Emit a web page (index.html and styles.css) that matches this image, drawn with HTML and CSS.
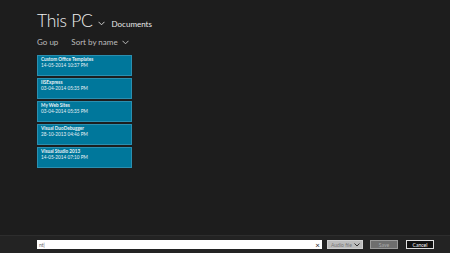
FILE: index.html
```html
<!DOCTYPE html>
<html>
<head>
<meta charset="utf-8">
<link rel="stylesheet" href="styles.css">
</head>
<body>
<div class="page">
  <header class="head">
    <h1 class="title">This PC</h1>
    <svg class="chev big" width="7" height="5" viewBox="0 0 7 5"><path d="M0.5 0.8 L3.5 3.8 L6.5 0.8" fill="none" stroke="#cfcfcf" stroke-width="1"/></svg>
    <span class="crumb">Documents</span>
  </header>
  <nav class="tools">
    <span class="tool">Go up</span>
    <span class="tool">Sort by name</span>
    <svg class="chev" width="7" height="5" viewBox="0 0 7 5"><path d="M0.5 0.8 L3.5 3.8 L6.5 0.8" fill="none" stroke="#bdbdbd" stroke-width="1"/></svg>
  </nav>
  <ul class="tiles">
    <li class="tile"><span class="name">Custom Office Templates</span><span class="date">14-05-2014 10:37 PM</span></li>
    <li class="tile"><span class="name">IISExpress</span><span class="date">03-04-2014 05:35 PM</span></li>
    <li class="tile"><span class="name">My Web Sites</span><span class="date">03-04-2014 05:35 PM</span></li>
    <li class="tile"><span class="name">Visual DuoDebugger</span><span class="date">28-10-2013 04:46 PM</span></li>
    <li class="tile"><span class="name">Visual Studio 2013</span><span class="date">14-05-2014 07:10 PM</span></li>
  </ul>
  <footer class="bar">
    <div class="field"><span class="val">nt|</span><span class="clear">×</span></div>
    <div class="select"><span>Audio file</span><svg width="6" height="4" viewBox="0 0 6 4"><path d="M0.5 0.5 L3 3 L5.5 0.5" fill="none" stroke="#333" stroke-width="1"/></svg></div>
    <button class="btn save">Save</button>
    <button class="btn cancel">Cancel</button>
  </footer>
</div>
</body>
</html>
```
FILE: styles.css
```css
html, body { margin: 0; padding: 0; }
body {
  width: 450px; height: 253px; overflow: hidden;
  background: #1d1d1d;
  font-family: Lato, "Liberation Sans", sans-serif;
  color: #e6e6e6;
}
.page { display: flex; flex-direction: column; height: 253px; }
.head { display: flex; align-items: baseline; padding: 9px 0 0 37px; height: 24px; }
.title { margin: 0; font-size: 17.5px; font-weight: 300; line-height: 24px; color: #f0f0f0; letter-spacing: -0.3px; }
.chev.big { margin: 0 7px 0 5px; align-self: center; position: relative; top: 2px; }
.crumb { font-size: 8px; color: #e8e8e8; }
.tools { display: flex; align-items: center; padding: 3px 0 0 37px; height: 12px; font-size: 8px; color: #bdbdbd; }
.tools .tool { margin-right: 4px; }
.tools .tool:first-child { margin-right: 13px; }
.tiles { list-style: none; margin: 7px 0 0 37px; padding: 0; display: flex; flex-direction: column; gap: 2px; width: 95px; }
.tile {
  box-sizing: border-box; height: 21px;
  background: #00779b; border: 1px solid #2b8fb0;
  display: flex; flex-direction: column; padding: 1px 0 0 3px;
  font-size: 4.7px; line-height: 5.5px; color: #e8f2f6;
}
.tile .name { font-weight: 700; }
.bar {
  margin-top: auto; height: 17px; background: #232323; border-top: 1px solid #2d2d2d;
  display: flex; align-items: center; padding-left: 37px; gap: 0;
}
.field { box-sizing: border-box; width: 285px; height: 9px; background: #fff; display: flex; align-items: center; justify-content: space-between; padding: 0 2px 0 2px; font-size: 5px; color: #666; }
.clear { font-size: 8px; color: #222; line-height: 8px; }
.select { box-sizing: border-box; margin-left: 5px; width: 36px; height: 9px; background: #bcbcbc; border: 1px solid #d0d0d0; display: flex; align-items: center; justify-content: space-between; padding: 0 2px 0 3px; font-size: 5px; color: #777; }
.btn { box-sizing: border-box; height: 9px; font-family: inherit; font-size: 5px; padding: 0; display: flex; align-items: center; justify-content: center; }
.save { margin-left: 7px; width: 28px; background: #6e6e6e; border: 1px solid #9a9a9a; color: #aaa; }
.cancel { margin-left: 8px; width: 28px; background: #111; border: 1px solid #e0e0e0; color: #fff; }
```
